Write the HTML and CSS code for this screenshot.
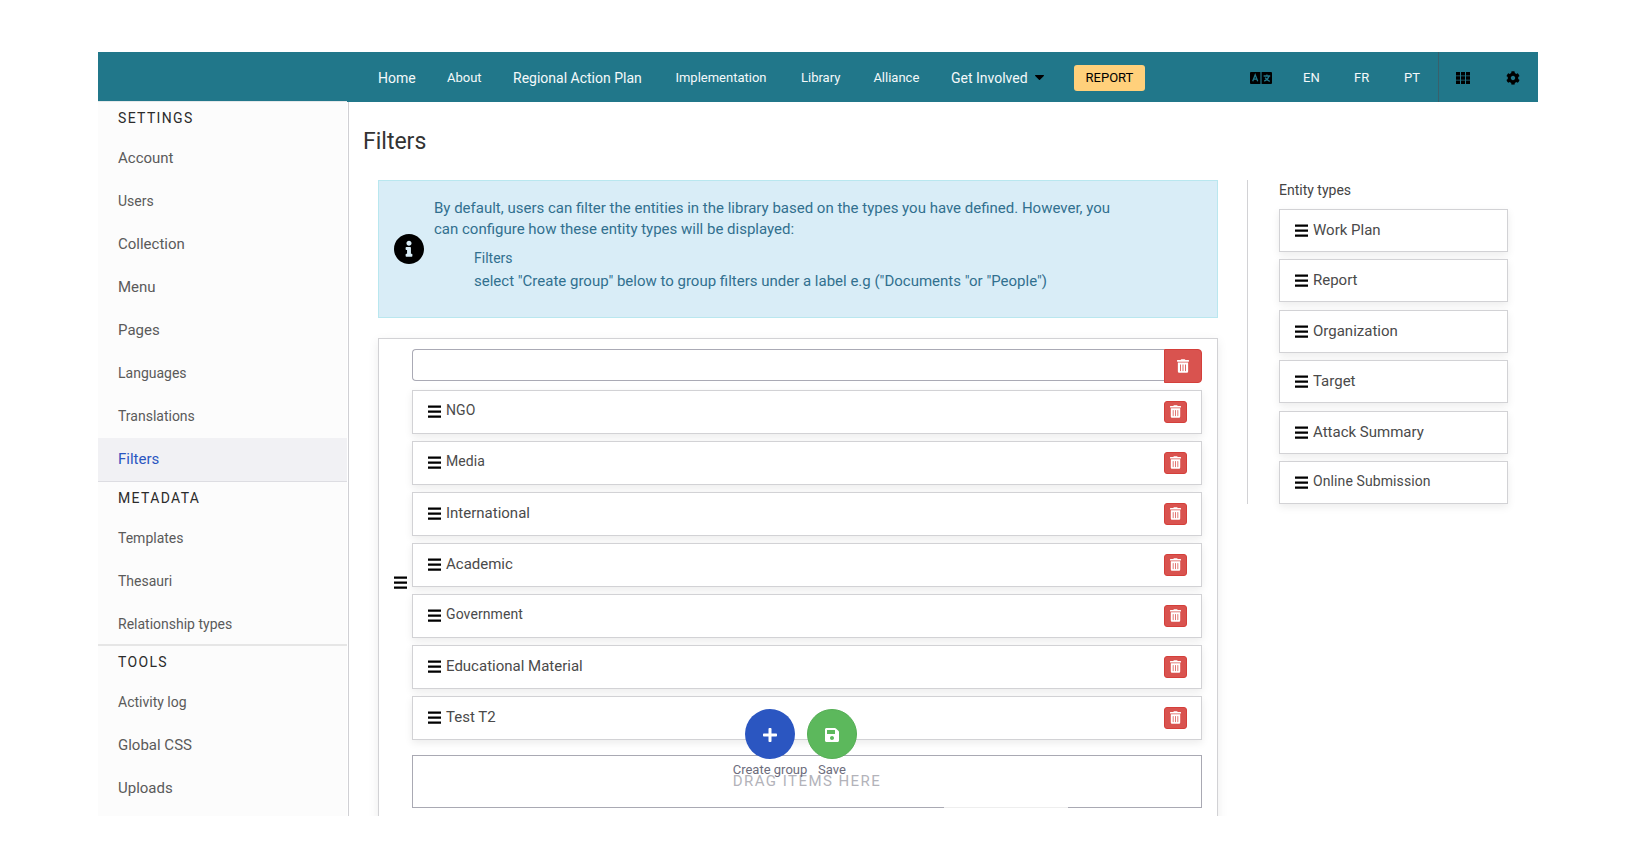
FILE: index.html
```html
<!DOCTYPE html>
<html lang="en">
<head>
<meta charset="utf-8">
<title>Filters</title>
<link rel="stylesheet" href="styles.css">
</head>
<body>
<svg class="defs" width="0" height="0">
  <symbol id="bars" viewBox="0 0 13 13"><path d="M0 .4h13v2.3H0zM0 5.4h13v2.3H0zM0 10.4h13v2.3H0z"/></symbol>
  <symbol id="trash" viewBox="0 0 448 512"><path d="M32 464a48 48 0 0 0 48 48h288a48 48 0 0 0 48-48V128H32zm272-256a16 16 0 0 1 32 0v224a16 16 0 0 1-32 0zm-96 0a16 16 0 0 1 32 0v224a16 16 0 0 1-32 0zm-96 0a16 16 0 0 1 32 0v224a16 16 0 0 1-32 0zM432 32H312l-9.4-18.7A24 24 0 0 0 281.1 0H166.8a23.72 23.72 0 0 0-21.4 13.3L136 32H16A16 16 0 0 0 0 48v32a16 16 0 0 0 16 16h416a16 16 0 0 0 16-16V48a16 16 0 0 0-16-16z"/></symbol>
</svg>
<div class="app">
  <header class="header">
    <nav class="nav">
      <a class="lg home">Home</a>
      <a class="about">About</a>
      <a class="lg plan">Regional Action Plan</a>
      <a class="impl">Implementation</a>
      <a class="library">Library</a>
      <a class="alliance">Alliance</a>
      <a class="lg involved">Get Involved</a>
      <svg class="caret" viewBox="0 0 9 6"><path d="M.6 0h7.8c.6 0 .8.6.4 1L5 4.8c-.3.3-.7.3-1 0L.2 1C-.2.6 0 0 .6 0z"/></svg>
      <a class="report">REPORT</a>
    </nav>
    <div class="tools">
      <svg class="lang-icon" viewBox="0 0 22 12"><path d="M1 0h9.4v12H1a1 1 0 0 1-1-1V1a1 1 0 0 1 1-1zM11.6 0H21a1 1 0 0 1 1 1v10a1 1 0 0 1-1 1h-9.4z"/><path class="cut" d="M2.7 9.2L5.2 2.8 7.7 9.2M3.6 7.2h3.2M13.6 4h6.6M16.9 2.4V4M19 4.2c-.6 2.3-2.4 4-4.8 5M15.2 5.6c.8 1.7 2.4 3 4.6 3.7"/></svg>
      <a class="en">EN</a><a class="fr">FR</a><a class="pt">PT</a>
      <div class="icons">
        <svg class="grid-icon" viewBox="0 0 14 12"><path d="M0 0h4v3.4H0zM5 0h4v3.4H5zM10 0h4v3.4h-4zM0 4.3h4v3.4H0zM5 4.3h4v3.4H5zM10 4.3h4v3.4h-4zM0 8.6h4V12H0zM5 8.6h4V12H5zM10 8.6h4V12h-4z"/></svg>
        <svg class="cog" viewBox="0 0 512 512"><path d="M487.4 315.7l-42.6-24.6c4.3-23.2 4.3-47 0-70.2l42.6-24.6c4.9-2.8 7.1-8.6 5.5-14-11.1-35.6-30-67.8-54.7-94.6-3.8-4.1-10-5.1-14.8-2.3L380.8 110c-17.9-15.4-38.5-27.3-60.8-35.1V25.8c0-5.6-3.9-10.5-9.4-11.7-36.7-8.2-74.3-7.8-109.2 0-5.5 1.2-9.4 6.1-9.4 11.7V75c-22.2 7.9-42.8 19.8-60.8 35.1L88.7 85.5c-4.9-2.8-11-1.9-14.8 2.3-24.7 26.7-43.6 58.9-54.7 94.6-1.7 5.4.6 11.2 5.5 14L67.3 221c-4.3 23.2-4.3 47 0 70.2l-42.6 24.6c-4.9 2.8-7.1 8.6-5.5 14 11.1 35.6 30 67.8 54.7 94.6 3.8 4.1 10 5.1 14.8 2.3l42.6-24.6c17.9 15.4 38.5 27.3 60.8 35.1v49.2c0 5.6 3.9 10.5 9.4 11.7 36.7 8.2 74.3 7.8 109.2 0 5.5-1.2 9.4-6.1 9.4-11.7v-49.2c22.2-7.9 42.8-19.8 60.8-35.1l42.6 24.6c4.9 2.8 11 1.9 14.8-2.3 24.7-26.7 43.6-58.9 54.7-94.6 1.5-5.5-.7-11.3-5.6-14.1zM256 336c-44.1 0-80-35.9-80-80s35.9-80 80-80 80 35.9 80 80-35.9 80-80 80z"/></svg>
      </div>
    </div>
  </header>
  <div class="body">
    <aside class="sidebar">
      <section>
        <h2>SETTINGS</h2>
        <a>Account</a><a class="sm">Users</a><a>Collection</a><a>Menu</a><a>Pages</a><a class="sm">Languages</a><a class="sm">Translations</a><a class="active">Filters</a>
      </section>
      <section class="metadata">
        <h2>METADATA</h2>
        <a class="sm">Templates</a><a class="sm">Thesauri</a><a class="sm">Relationship types</a>
      </section>
      <section>
        <h2>TOOLS</h2>
        <a class="sm">Activity log</a><a>Global CSS</a><a>Uploads</a>
      </section>
    </aside>
    <main class="main">
      <h1>Filters</h1>
      <div class="columns">
        <div class="left">
          <div class="alert">
            <svg class="info" viewBox="8 8 496 496"><path d="M256 8C119.043 8 8 119.083 8 256c0 136.997 111.043 248 248 248s248-111.003 248-248C504 119.083 392.957 8 256 8zm0 110c23.196 0 42 18.804 42 42s-18.804 42-42 42-42-18.804-42-42 18.804-42 42-42zm56 254c0 6.627-5.373 12-12 12h-88c-6.627 0-12-5.373-12-12v-24c0-6.627 5.373-12 12-12h12v-64h-12c-6.627 0-12-5.373-12-12v-24c0-6.627 5.373-12 12-12h64c6.627 0 12 5.373 12 12v100h12c6.627 0 12 5.373 12 12v24z"/></svg>
            <div class="alert-text">
              <p>By default, users can filter the entities in the library based on the types you have defined. However, you<br>can configure how these entity types will be displayed:</p>
              <dl><dt>Filters</dt><dd>select "Create group" below to group filters under a label e.g ("Documents "or "People")</dd></dl>
            </div>
          </div>
          <div class="group">
            <div class="handle"><svg class="bars"><use href="#bars"/></svg></div>
            <div class="group-body">
              <div class="name-row"><div class="input"></div><button class="del big"><svg><use href="#trash"/></svg></button></div>
              <div class="item sm"><svg class="bars"><use href="#bars"/></svg><span>NGO</span><button class="del"><svg><use href="#trash"/></svg></button></div>
              <div class="item sm"><svg class="bars"><use href="#bars"/></svg><span>Media</span><button class="del"><svg><use href="#trash"/></svg></button></div>
              <div class="item"><svg class="bars"><use href="#bars"/></svg><span>International</span><button class="del"><svg><use href="#trash"/></svg></button></div>
              <div class="item"><svg class="bars"><use href="#bars"/></svg><span>Academic</span><button class="del"><svg><use href="#trash"/></svg></button></div>
              <div class="item sm"><svg class="bars"><use href="#bars"/></svg><span>Government</span><button class="del"><svg><use href="#trash"/></svg></button></div>
              <div class="item"><svg class="bars"><use href="#bars"/></svg><span>Educational Material</span><button class="del"><svg><use href="#trash"/></svg></button></div>
              <div class="item"><svg class="bars"><use href="#bars"/></svg><span>Test T2</span><button class="del"><svg><use href="#trash"/></svg></button></div>
              <div class="drop"><span>DRAG ITEMS HERE</span><i class="gap"></i></div>
            </div>
          </div>
        </div>
        <div class="right">
          <h3>Entity types</h3>
          <div class="item"><svg class="bars"><use href="#bars"/></svg><span>Work Plan</span></div>
          <div class="item"><svg class="bars"><use href="#bars"/></svg><span>Report</span></div>
          <div class="item"><svg class="bars"><use href="#bars"/></svg><span>Organization</span></div>
          <div class="item"><svg class="bars"><use href="#bars"/></svg><span>Target</span></div>
          <div class="item"><svg class="bars"><use href="#bars"/></svg><span>Attack Summary</span></div>
          <div class="item sm"><svg class="bars"><use href="#bars"/></svg><span>Online Submission</span></div>
        </div>
      </div>
    </main>
  </div>
  <div class="fabs">
    <div class="fab create"><div class="circle"><svg viewBox="0 0 448 512"><path d="M416 208H272V64c0-17.67-14.33-32-32-32h-32c-17.67 0-32 14.33-32 32v144H32c-17.67 0-32 14.33-32 32v32c0 17.67 14.33 32 32 32h144v144c0 17.67 14.33 32 32 32h32c17.67 0 32-14.33 32-32V304h144c17.67 0 32-14.33 32-32v-32c0-17.67-14.33-32-32-32z"/></svg></div><span>Create group</span></div>
    <div class="fab save"><div class="circle"><svg viewBox="0 0 448 512"><path d="M433.941 129.941l-83.882-83.882A48 48 0 0 0 316.118 32H48C21.49 32 0 53.49 0 80v352c0 26.51 21.49 48 48 48h352c26.51 0 48-21.49 48-48V163.882a48 48 0 0 0-14.059-33.941zM224 416c-35.346 0-64-28.654-64-64 0-35.346 28.654-64 64-64s64 28.654 64 64c0 35.346-28.654 64-64 64zm96-304.52V212c0 6.627-5.373 12-12 12H76c-6.627 0-12-5.373-12-12V108c0-6.627 5.373-12 12-12h228.52c3.183 0 6.235 1.264 8.485 3.515l3.48 3.48A11.996 11.996 0 0 1 320 111.48z"/></svg></div><span>Save</span></div>
  </div>
</div>
</body>
</html>
```
FILE: styles.css
```css
* { box-sizing: border-box; }
html, body { margin: 0; height: 868px; overflow: hidden; background: #fff; }
body { padding: 52px 98px; font-family: Roboto, "Liberation Sans", sans-serif; font-size: 15px; color: #4a4a4a; }
.defs { position: absolute; }
svg { display: block; flex: none; }
h1, h2, h3, p, dl, dd { margin: 0; font-weight: 400; }
a { white-space: nowrap; }
.app { position: relative; width: 1440px; height: 764px; overflow: hidden; }

.header { height: 50px; background: #21778a; color: #f4f9fa; font-size: 13px; display: flex; justify-content: space-between; align-items: center; }
.nav { display: flex; align-items: center; height: 50px; padding-left: 280px; padding-top: 1px; }
.nav a { padding-bottom: 1px; }
.nav .lg { font-size: 14px; padding: 0; }
.home { width: 69px; }
.about { width: 66px; }
.plan { width: 162.4px; }
.impl { width: 125.6px; }
.library { width: 72.4px; }
.alliance { width: 77.6px; }
.involved { width: 84px; }
.caret { width: 9px; height: 6px; margin-right: 30px; }
.nav .report { width: 71px; height: 26px; padding: 0; border-radius: 3px; background: #ffd07b; color: #000; text-align: center; line-height: 25px; }
.tools { display: flex; align-items: center; height: 50px; }
.lang-icon { width: 22px; height: 12px; margin-right: 31px; margin-top: 1px; }
.cut { fill: none; stroke: #21778a; stroke-width: 1.3; }
.en { width: 51px; }
.fr { width: 50px; }
.pt { width: 34px; }
.icons { display: flex; align-items: center; height: 50px; width: 100px; border-left: 1px solid #38606c; padding: 2px 18px 0 17px; justify-content: space-between; }
.grid-icon { width: 14px; height: 12px; }
.cog { width: 14px; height: 14px; }

.body { display: flex; height: 714px; }
.sidebar { flex: none; width: 251px; height: 714px; padding-right: 1px; border-right: 1px solid #d0d0d4; display: flex; flex-direction: column; }
.sidebar section { flex: none; background: #fcfcfc; border-bottom: 1px solid #dddde2; }
.sidebar section:first-child { margin-top: -1px; border-top: 1px solid #e4e8ea; }
.sidebar section:last-child { flex: 1; border: 0; }
.sidebar h2 { height: 35px; padding: 0 20px; line-height: 32px; font-size: 14px; letter-spacing: 1.35px; color: #2b2b2b; }
.sidebar a { display: block; height: 43px; line-height: 43px; padding-left: 20px; font-size: 15px; color: #5a5a5a; }
.sidebar a.sm { font-size: 14px; }
.sidebar a.active { background: #f1f1f4; color: #2b56c1; }
.sidebar section.metadata { border-bottom: 2px solid #e6e6e6; }
.metadata h2 { line-height: 33px; }
.sidebar .metadata a:last-child { height: 41px; }

.main { flex: 1; padding: 24px 0 0 14px; }
h1 { font-size: 23px; line-height: 32px; color: #333; }
.columns { display: flex; align-items: flex-start; padding: 22px 0 0 15px; }
.left { flex: none; width: 840px; }
.alert { height: 138px; border: 1px solid #b9e7ef; background: #d9edf7; color: #31708f; display: flex; align-items: center; padding: 0 15px; }
.info { width: 30px; height: 30px; margin-right: 10px; }
.alert-text { height: 136px; padding-top: 17px; }
.alert p { line-height: 21px; white-space: nowrap; font-size: 15px; }
.alert dl { padding: 7px 0 0 40px; }
.alert dt { font-size: 14px; line-height: 22px; }
.alert dd { padding-top: 1px; line-height: 22px; }
.group { margin-top: 20px; height: 500px; border: 1px solid #d2d2d5; box-shadow: 0 3px 10px rgba(0,0,0,.08); padding: 10px 15px; display: flex; }
.handle { width: 18px; padding-top: 227px; }
.bars { width: 13px; height: 13px; }
.group-body { flex: 1; }
.name-row { display: flex; align-items: flex-start; height: 34px; margin-bottom: 7px; }
.input { flex: 1; height: 32px; border: 1px solid #aaaab5; border-right: 0; border-radius: 4px 0 0 4px; }
.del { width: 23px; height: 22px; padding: 0; border: 1px solid #d43f3a; border-radius: 3px; background: #d9534f; display: flex; justify-content: center; padding-top: 3px; fill: #fff; }
.del svg { width: 11px; height: 13px; }
.del.big { width: 38px; height: 34px; border-radius: 0 4px 4px 0; padding-top: 9px; }
.del.big svg { width: 12px; height: 14px; }
.item { display: flex; align-items: flex-start; height: 44px; margin-bottom: 7px; border: 1px solid #d2d2d5; background: #fff; box-shadow: 0 3px 8px rgba(0,0,0,.08); padding: 0 14px 0 15px; }
.item .bars { margin: 14px 5px 0 0; }
.item span { flex: 1; line-height: 40px; font-size: 15px; }
.item.sm span { font-size: 14px; letter-spacing: .1px; line-height: 39px; }
.item .del { margin-top: 10px; }
.drop { position: relative; margin-top: 15px; height: 53px; border: 1px solid #a9a9b3; text-align: center; line-height: 51px; font-size: 15px; letter-spacing: 1.45px; color: #b3b3ba; }
.gap { position: absolute; left: 531px; bottom: -1px; width: 124px; height: 1px; background: #eee; }
.right { flex: none; margin-left: 29px; width: 261px; height: 324px; border-left: 1px solid #d2d2d5; padding-left: 31px; }
h3 { font-size: 14px; line-height: 20px; height: 29px; color: #444; }
.right .item { height: 43px; margin-bottom: 7.4px; }

.fabs { position: absolute; left: 635px; top: 657px; display: flex; }
.fab { display: flex; flex-direction: column; align-items: center; white-space: nowrap; font-size: 13px; color: #6c6c7c; }
.create { width: 74px; }
.save { width: 50px; }
.circle { width: 50px; height: 50px; border-radius: 50%; display: flex; align-items: center; justify-content: center; background: #2b56c1; fill: #fff; padding-top: 2px; }
.save .circle { background: #5cb85c; border: 1px solid #55ae55; }
.circle svg { width: 14px; height: 16px; }
.fab span { padding-top: 1px; line-height: 20px; }
```
